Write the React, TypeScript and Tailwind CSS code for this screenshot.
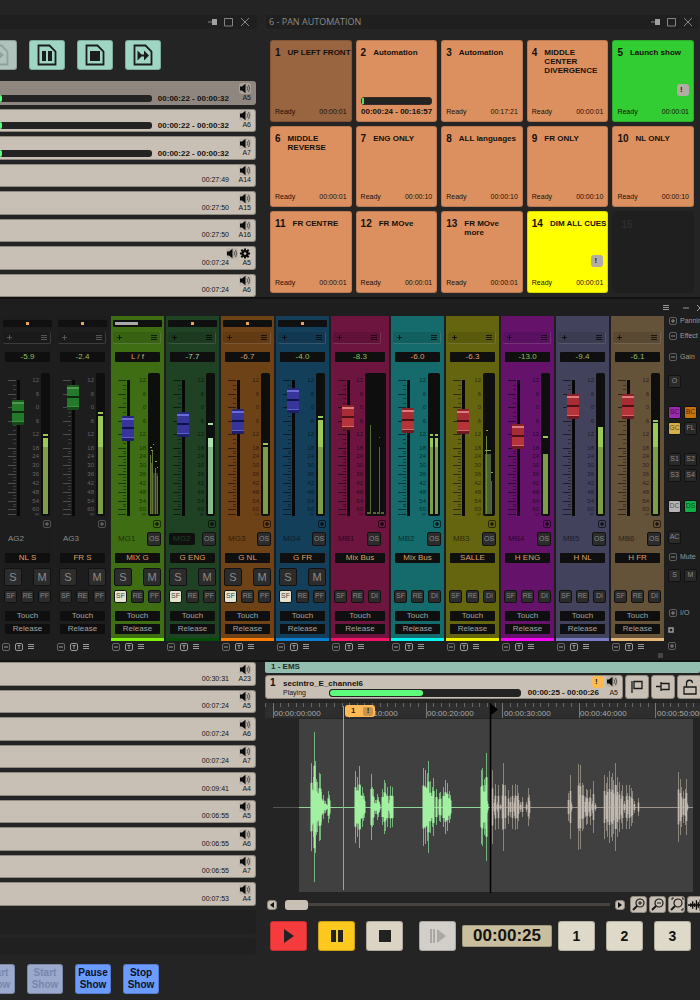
import clsx from 'clsx';

type Strip = {
  id: string;
  name: string;
  value: string;
  valueColor: string;
  bg: string;
  line: string;
  knob: 'green' | 'blue' | 'red';
  knobY: number;
  meter: 'single' | 'pale' | 'stereo' | 'multi' | 'wide' | 'dark';
  top?: number;
  peak?: number;
  group: 'ag' | 'mg' | 'mb';
};

const GREEN = 'text-[#8fbf5c]';
const ORANGE = 'text-[#dda066]';
const PALE = 'text-[#9fd3a6]';

const STRIPS: Strip[] = [
  { id: 'AG2', name: 'NL S', value: '-5.9', valueColor: GREEN, bg: 'bg-[#1d1d1d]', line: 'bg-[#1d1d1d]', knob: 'green', knobY: 413, meter: 'single', top: 438, peak: 434, group: 'ag' },
  { id: 'AG3', name: 'FR S', value: '-2.4', valueColor: GREEN, bg: 'bg-[#1d1d1d]', line: 'bg-[#1d1d1d]', knob: 'green', knobY: 398, meter: 'single', top: 416, peak: 412, group: 'ag' },
  { id: 'MG1', name: 'MIX G', value: 'L / f', valueColor: ORANGE, bg: 'bg-[#3f6d14]', line: 'bg-[#7df00c]', knob: 'blue', knobY: 429, meter: 'multi', group: 'mg' },
  { id: 'MG2', name: 'G ENG', value: '-7.7', valueColor: PALE, bg: 'bg-[#1f4124]', line: 'bg-[#064d08]', knob: 'blue', knobY: 425, meter: 'pale', top: 438, peak: 423, group: 'mg' },
  { id: 'MG3', name: 'G NL', value: '-6.7', valueColor: ORANGE, bg: 'bg-[#6e4217]', line: 'bg-[#ff7b08]', knob: 'blue', knobY: 422, meter: 'single', top: 447, peak: 443, group: 'mg' },
  { id: 'MG4', name: 'G FR', value: '-4.0', valueColor: GREEN, bg: 'bg-[#133f5a]', line: 'bg-[#0a7fd0]', knob: 'blue', knobY: 401, meter: 'single', top: 420, peak: 416, group: 'mg' },
  { id: 'MB1', name: 'Mix Bus', value: '-8.3', valueColor: GREEN, bg: 'bg-[#6d143f]', line: 'bg-[#f51268]', knob: 'red', knobY: 418, meter: 'wide', group: 'mb' },
  { id: 'MB2', name: 'Mix Bus', value: '-6.0', valueColor: ORANGE, bg: 'bg-[#156a6b]', line: 'bg-[#08f4f0]', knob: 'red', knobY: 421, meter: 'stereo', top: 438, peak: 434, group: 'mb' },
  { id: 'MB3', name: 'SALLE', value: '-6.3', valueColor: ORANGE, bg: 'bg-[#65650f]', line: 'bg-[#f2f208]', knob: 'red', knobY: 422, meter: 'dark', group: 'mb' },
  { id: 'MB4', name: 'H ENG', value: '-13.0', valueColor: GREEN, bg: 'bg-[#65126b]', line: 'bg-[#f40af4]', knob: 'red', knobY: 437, meter: 'single', top: 454, peak: 436, group: 'mb' },
  { id: 'MB5', name: 'H NL', value: '-9.4', valueColor: GREEN, bg: 'bg-[#42425c]', line: 'bg-[#7b7bc4]', knob: 'red', knobY: 407, meter: 'single', top: 427, group: 'mb' },
  { id: 'MB6', name: 'H FR', value: '-6.1', valueColor: GREEN, bg: 'bg-[#645239]', line: 'bg-[#e6b678]', knob: 'red', knobY: 407, meter: 'single', top: 423, peak: 420, group: 'mb' },
];

const SCALE: [string, number][] = [
  ['12', 7], ['6', 21], ['0', 34], ['6', 48], ['12', 61], ['18', 75], ['24', 83],
  ['30', 92], ['36', 101], ['42', 110], ['48', 119], ['54', 128], ['60', 136], ['∞', 141],
];

const KNOBS = {
  green: '[&::-webkit-slider-thumb]:bg-[linear-gradient(#1c5a20_0_2px,#4c9a50_2px_4px,#237a2a_4px_11px,#0c2a0e_11px_13px,#237a2a_13px_21px,#3b8f40_21px_22px,#15491a_22px)]',
  blue: '[&::-webkit-slider-thumb]:bg-[linear-gradient(#28287a_0_2px,#6a6ad8_2px_4px,#35359c_4px_11px,#10104a_11px_13px,#35359c_13px_21px,#6060d0_21px_22px,#20206a_22px)]',
  red: '[&::-webkit-slider-thumb]:bg-[linear-gradient(#8a2028_0_2px,#dc7a7c_2px_4px,#a82c34_4px_11px,#4a1014_11px_13px,#b4343a_13px_21px,#d8686c_21px_22px,#6e1a20_22px)]',
};

const TOP_CUES = [
  { playing: true, dim: true, out: 'A5' },
  { playing: true, out: 'A6' },
  { playing: true, out: 'A7' },
  { time: '00:27:49', out: 'A14' },
  { time: '00:27:50', out: 'A15' },
  { time: '00:27:50', out: 'A16' },
  { time: '00:07:24', out: 'A5', gear: true },
  { time: '00:07:24', out: 'A6' },
];

const BOTTOM_CUES = [
  { time: '00:30:31', out: 'A23' },
  { time: '00:07:24', out: 'A5' },
  { time: '00:07:24', out: 'A6' },
  { time: '00:07:24', out: 'A7' },
  { time: '00:09:41', out: 'A4' },
  { time: '00:06:55', out: 'A5' },
  { time: '00:06:55', out: 'A6' },
  { time: '00:06:55', out: 'A7' },
  { time: '00:07:53', out: 'A4' },
];

const PADS = [
  { n: 1, title: 'UP LEFT FRONT', time: '00:00:01', bg: 'bg-[#996440]' },
  { n: 2, title: 'Automation', progress: '00:00:24 - 00:16:57' },
  { n: 3, title: 'Automation', time: '00:17:21' },
  { n: 4, title: 'MIDDLE\nCENTER\nDIVERGENCE', time: '00:00:01' },
  { n: 5, title: 'Launch show', time: '00:00:01', bg: 'bg-[#32cd32]', note: true },
  { n: 6, title: 'MIDDLE\nREVERSE', time: '00:00:01' },
  { n: 7, title: 'ENG ONLY', time: '00:00:10' },
  { n: 8, title: 'ALL languages', time: '00:00:10' },
  { n: 9, title: 'FR ONLY', time: '00:00:10' },
  { n: 10, title: 'NL ONLY', time: '00:00:10' },
  { n: 11, title: 'FR CENTRE', time: '00:00:01' },
  { n: 12, title: 'FR MOve', time: '00:00:01' },
  { n: 13, title: 'FR MOve\nmore', time: '00:00:01' },
  { n: 14, title: 'DIM ALL CUES', time: '00:00:01', bg: 'bg-[#ffff00]', note: true },
];

// [x, half height] pairs of the clip
const PLAYED = [
  [46, 44], [47, 18], [48, 30], [49, 75], [50, 46], [51, 28], [52, 25], [54, 34], [55, 33], [56, 15], [58, 12], [60, 6], [61, 3], [63, 16], [64, 12],
  [90, 36], [91, 12], [92, 30], [94, 41], [95, 22], [97, 20], [98, 14], [99, 11], [106, 33], [107, 20], [108, 18], [110, 7], [112, 13], [113, 10], [114, 5],
  [117, 18], [119, 27], [120, 24], [122, 20], [124, 7], [125, 21], [127, 20], [158, 39], [160, 37], [162, 34], [163, 46], [165, 26], [167, 20], [168, 29], [171, 18], [174, 14], [175, 15],
  [178, 20], [180, 27], [182, 24], [184, 16], [185, 12], [216, 37], [217, 39], [219, 28], [220, 22], [221, 54], [222, 6],
];
const AHEAD = [
  [227, 37], [229, 8], [230, 23], [232, 5], [233, 22], [235, 3], [237, 23], [238, 44], [240, 22], [243, 17], [245, 10], [247, 22], [249, 9], [250, 23], [252, 22], [253, 14], [255, 5], [257, 10],
  [261, 5], [263, 19], [264, 12], [303, 14], [305, 32], [306, 5], [313, 43], [314, 24], [315, 42], [317, 24], [318, 22], [320, 10], [321, 18], [322, 17], [324, 10], [325, 18], [327, 6], [328, 26], [330, 4],
  [339, 32], [341, 24], [342, 30], [344, 36], [346, 30], [347, 34], [348, 27], [350, 44], [351, 22], [352, 30], [354, 25], [356, 16], [357, 22], [359, 6], [361, 22], [362, 14], [364, 22], [366, 19], [367, 16], [369, 6], [373, 9],
  [413, 35], [415, 28], [416, 20], [418, 16], [420, 18], [421, 28], [422, 4],
];

const wavePath = (data: number[][], scale: number) =>
  data.map(([x, h]) => `M${x}.5 ${104 - h * scale}V${104 + h * scale}`).join('');

function Speaker() {
  return (
    <svg viewBox="0 0 12 11" className="h-[11px] w-3 rounded-[3px] bg-[#b5ada4]/70">
      <path d="M1 3.5h2L6.500 .8v9.400L3 7.500H1z" fill="#0b0b0b" />
      <path d="M8 3.500q1.400 2 0 4M9.500 2q2.400 3.500 0 7" fill="none" stroke="#333" strokeWidth=".8" />
    </svg>
  );
}

function Gear() {
  return (
    <svg viewBox="0 0 12 12" className="h-[11px] w-3" stroke="#0b0b0b" fill="none">
      <path d="M6 .5v11M.5 6h11M2 2l8 8M10 2l-8 8" strokeWidth="2.200" />
      <circle cx="6" cy="6" r="2.700" fill="#c9c0b5" strokeWidth="2.400" />
    </svg>
  );
}

function WindowButtons() {
  return (
    <svg viewBox="0 0 42 10" className="h-[10px] w-[42px]" stroke="#858585" fill="none">
      <path d="M0 5h4" />
      <path d="M4 2h5v6H4z" fill="#a0a0a0" stroke="none" />
      <path d="M16.500 1.500h8v7.500h-8zM33 1l8 8M41 1l-8 8" />
    </svg>
  );
}

function PlusBox({ minus, className }: { minus?: boolean; className?: string }) {
  return (
    <svg viewBox="0 0 8 8" className={clsx('h-2 w-2 shrink-0', className)} fill="none" stroke="currentColor">
      <rect x=".5" y=".5" width="7" height="7" rx="1.500" opacity=".6" />
      <path d={minus ? 'M2 4h4' : 'M2 4h4M4 2v4'} />
    </svg>
  );
}

function Lines({ className }: { className?: string }) {
  return (
    <svg viewBox="0 0 6 6" className={clsx('h-[6px] w-[6px]', className)} stroke="currentColor">
      <path d="M0 .5h6M0 2.500h6M0 4.500h6" />
    </svg>
  );
}

type Cue = { time?: string; out: string; playing?: boolean; dim?: boolean; gear?: boolean };

function CueRow({ cue }: { cue: Cue }) {
  return (
    <li className={clsx('flex min-h-0 items-end rounded-r-[3px] border-y border-r border-[#8f887f] pr-1 pb-[2px]', cue.dim ? 'bg-[#8f867f]' : 'bg-[#c9c0b5]')}>
      {cue.playing ? (
        <>
          <div className="h-[7px] flex-1 rounded-r-[3px] bg-[#232323]">
            <div className="h-[7px] w-[2px] rounded-r-[3px] bg-[#5dfc7b]" />
          </div>
          <span className="ml-[6px] text-[8px] leading-[6px] font-bold whitespace-nowrap">00:00:22 - 00:00:32</span>
        </>
      ) : (
        <span className="ml-auto text-[7px] leading-[8px]">{cue.time}</span>
      )}
      <div className="flex w-[22px] flex-col items-end">
        <div className="flex gap-[1px]">
          <Speaker />
          {cue.gear && <Gear />}
        </div>
        <span className="text-[7px] leading-[8px]">{cue.out}</span>
      </div>
    </li>
  );
}

function Note({ className }: { className: string }) {
  return (
    <span className={clsx('flex h-3 w-3 items-center rounded-[3px] pl-[3px] text-[8px] leading-3 font-bold text-[#222]', className)}>!</span>
  );
}

function Pad({ pad }: { pad: (typeof PADS)[number] }) {
  return (
    <button className={clsx('flex aspect-square flex-col rounded-[3px] border border-black/15 px-1 pt-[7px] pb-[5px] text-left text-[#17100a]', pad.bg ?? 'bg-[#dc9060]')}>
      <span className="flex gap-[7px] font-bold">
        <span className="text-[10px] leading-[9px]">{pad.n}</span>
        <span className="text-[8px] leading-[9px] whitespace-pre">{pad.title}</span>
      </span>
      <span className="mt-auto flex flex-col">
        {pad.note && <Note className="mb-[11px] self-end bg-[#b3aca5]" />}
        {pad.progress ? (
          <>
            <span className="mb-[3px] h-2 rounded-[3px] border border-[#3a2c22] bg-[#232323]">
              <span className="block h-[6px] w-[2px] bg-[#4fe070]" />
            </span>
            <span className="text-right text-[8px] leading-[8px] font-bold whitespace-nowrap">{pad.progress}</span>
          </>
        ) : (
          <span className="flex justify-between text-[7px] leading-[9px]">
            <span>Ready</span>
            <span>{pad.time}</span>
          </span>
        )}
      </span>
    </button>
  );
}

function DocButton({ label, glyph, faded }: { label: string; glyph: string; faded?: boolean }) {
  return (
    <button aria-label={label} className={clsx('flex h-[30px] w-9 shrink-0 items-center justify-center rounded-[3px] border border-black/20', faded ? 'bg-[#b0c4bd]' : 'bg-[#9fd6c3]')}>
      <svg viewBox="0 0 20 22" className={clsx('h-[22px] w-5', faded && 'opacity-20')}>
        <path d="M1.500 1.500h11l6 6V20.500h-17z" fill="none" stroke="#1c1c1c" strokeWidth="1.800" />
        <path d={glyph} fill="#1c1c1c" />
      </svg>
    </button>
  );
}

function Meter({ strip }: { strip: Strip }) {
  const t = (strip.top ?? 0) - 373;
  const p = strip.peak ? strip.peak - 373 : null;
  const w = { single: 'w-[9px]', pale: 'w-[9px]', stereo: 'w-3', multi: 'w-3', wide: 'w-[21px]', dark: 'w-3' }[strip.meter];
  const hi = strip.meter === 'pale' ? '#aee0b0' : '#9cc856';
  const lo = strip.meter === 'pale' ? '#86b98c' : '#7d9d48';
  const bars = strip.meter === 'stereo' ? [[2, 3], [7, 3]] : [[2, 5]];
  return (
    <svg className={clsx('h-[143px] shrink-0 rounded-[2px] bg-[#0e0e0e]', w)}>
      {t > 0 && bars.map(([x, bw]) => (
        <g key={x}>
          <rect x={x} y={t} width={bw} height={141 - t} fill={lo} />
          {t < 74 && <rect x={x} y={t} width={bw} height={74 - t} fill={hi} />}
          {p && <rect x={x} y={p} width={bw} height="2" fill={hi} />}
        </g>
      ))}
      {strip.meter === 'multi' && (
        <g fill="none" stroke="#64753a">
          <path d="M2 100h8v41H2z" fill="#333b20" stroke="none" />
          <path d="M2.500 82v59M4.500 78v63M7.500 95v46M9.500 103v38" />
          <path d="M3.500 90v51" stroke="#4a5730" />
          <path d="M2 74.500h2M5 71.500h1M3 77.500h2M7 88.500h2M9 94.500h1" stroke="#8ea551" />
        </g>
      )}
      {strip.meter === 'dark' && (
        <g fill="none">
          <path d="M2 81h6v60H2z" fill="#4b5f33" />
          <path d="M3.500 63v78" stroke="#6d8a3c" />
          <path d="M8.500 108v33" stroke="#54693a" />
          <path d="M3 57.500h2M2 77.500h6M8 99.500h2" stroke="#8aa64e" />
        </g>
      )}
      {strip.meter === 'wide' && (
        <g fill="none" stroke="#55682f">
          <path d="M5.500 52v89M14.500 74v67M14 64.500h1" />
          <path d="M2 140h3M8 140h11" strokeWidth="2" strokeDasharray="3 1" />
        </g>
      )}
    </svg>
  );
}

function Fader({ strip }: { strip: Strip }) {
  const ag = strip.group === 'ag';
  return (
    <div className={clsx('mt-[11px] flex h-[143px] pl-[7px]', strip.meter === 'wide' ? 'pr-[3px]' : 'pr-[4px]')}>
      <svg className={clsx('h-[143px] w-2', ag ? 'text-[#4c4c4c]' : 'text-black/55')} stroke="currentColor">
        {SCALE.map(([label, y], i) => {
          const next = SCALE[i + 1]?.[1] ?? y;
          const step = Math.round((next - y) / 3);
          return (
            <g key={label + y}>
              <path d={`M0 ${y + 0.5}h8`} />
              {next - y > 5 && <path d={`M5 ${y + step + 0.5}h3M5 ${next - step + 0.5}h3`} opacity=".7" />}
            </g>
          );
        })}
      </svg>
      <input
        type="range"
        aria-label={`${strip.id} level`}
        min={0}
        max={117}
        defaultValue={503 - strip.knobY}
        className={clsx(
          '-ml-1 h-[143px] w-3 shrink-0 appearance-none bg-transparent bg-[linear-gradient(#080808,#080808)] bg-[length:3px_136px] bg-bottom bg-no-repeat [direction:rtl] [writing-mode:vertical-lr] [&::-webkit-slider-thumb]:h-[25px] [&::-webkit-slider-thumb]:w-3 [&::-webkit-slider-thumb]:appearance-none [&::-webkit-slider-thumb]:rounded-[1px]',
          KNOBS[strip.knob],
        )}
      />
      <svg className={clsx('h-[143px] min-w-0 flex-1', ag ? 'text-[#666]' : 'text-black/60')}>
        {SCALE.map(([label, y]) => (
          <text key={label + y} x="100%" dx="-2" y={y + 2} textAnchor="end" fontSize="6" fill="currentColor">{label}</text>
        ))}
      </svg>
      <Meter strip={strip} />
    </div>
  );
}

const KEY = 'flex items-center justify-center rounded-[2px] border border-[#121212] bg-[#2c2c2c] text-[#8a8a8a]';
const SLOT = 'flex h-[10px] w-full items-center justify-center rounded-[1px] bg-[#0f0f0f] text-[8px] leading-[10px]';

function ChannelStrip({ strip }: { strip: Strip }) {
  const ag = strip.group === 'ag';
  const mb = strip.group === 'mb';
  return (
    <section className={clsx('flex flex-col', strip.meter === 'wide' ? 'w-[58px] shrink-0' : 'min-w-0 flex-1')}>
      <div className={clsx('flex flex-col', strip.bg)}>
        <div className={clsx('mx-[2px] mt-1 flex h-[7px] items-center rounded-[1px] px-[2px]', !mb && 'bg-[#101010]', strip.id !== 'MG1' && 'justify-center')}>
          {!mb && <span className={strip.id === 'MG1' ? 'h-[3px] w-[23px] bg-[#a9a9a9]' : 'h-[3px] w-[3px] bg-[#e8a55c]'} />}
        </div>
        <div className={clsx('mx-[2px] mt-[5px] flex h-3 w-[48px] items-center justify-between rounded-[2px] border-r border-b border-white/15 bg-black/10 pr-[3px] pl-1', ag ? 'text-[#555]' : 'text-black/70')}>
          <svg viewBox="0 0 5 5" className="h-[5px] w-[5px]" stroke="currentColor"><path d="M0 2.500h5M2.500 0v5" /></svg>
          <Lines />
        </div>
        <div className="mt-2 px-1">
          <output className={clsx(SLOT, strip.valueColor)}>{strip.value}</output>
        </div>
        <Fader strip={strip} />
        <div className={clsx('mt-1 flex h-2 justify-end pr-[3px]', ag ? 'text-[#777]' : 'text-black')}>
          <PlusBox />
        </div>
        <div className="mt-1 flex h-[14px] items-center pl-[3px]">
          <span className={clsx('flex h-3 w-[26px] items-center rounded-[2px] pl-1 text-[8px]', ag ? 'text-[#8c8c8c]' : strip.id === 'MG2' ? 'bg-[#0f0f0f] text-[#1f4124]' : 'text-black/60')}>{strip.id}</span>
          {!ag && <button className={clsx(KEY, 'ml-[7px] h-[14px] w-[14px] shrink-0 text-[7px]')}>OS</button>}
        </div>
        <div className="mt-[7px] px-1">
          <div className={clsx(SLOT, ORANGE)}>{strip.name}</div>
        </div>
        <div className="mt-[5px] flex h-[18px] w-[50px] justify-between pl-[3px] text-[11px]">
          {!mb && <button className={clsx(KEY, 'w-[18px]')}>S</button>}
          {!mb && <button className={clsx(KEY, 'w-[18px]')}>M</button>}
        </div>
        <div className="mt-1 flex h-[13px] w-[50px] justify-between pl-[3px] text-[7px]">
          <button className={clsx('flex w-[13px] items-center justify-center rounded-[2px] border border-[#121212]', strip.group === 'mg' ? 'bg-[#e6e4cc] text-[#444]' : 'bg-[#2c2c2c] text-[#8a8a8a]')}>SF</button>
          <button className={clsx(KEY, 'w-[13px]')}>RE</button>
          <button className={clsx(KEY, 'w-[13px]')}>{mb ? 'DI' : 'PF'}</button>
        </div>
        <div className="mt-2 flex flex-col gap-[3px] px-1">
          <button className={clsx(SLOT, 'text-[#a3a3a3]')}>Touch</button>
          <button className={clsx(SLOT, 'text-[#a3a3a3]')}>Release</button>
        </div>
        <div className={clsx('mt-1 h-[3px]', strip.line)} />
      </div>
      <div className="mt-[2px] flex h-2 items-center gap-[5px] pl-[1px] text-[#9a9a9a]">
        <PlusBox minus />
        <svg viewBox="0 0 8 8" className="h-2 w-2" stroke="currentColor" fill="none">
          <rect x=".5" y=".5" width="7" height="7" rx="1.500" />
          <path d="M2.500 2.500h3M4 2.500V6" />
        </svg>
        <Lines />
      </div>
    </section>
  );
}

function SideLabel({ text, minus, className }: { text: string; minus?: boolean; className?: string }) {
  return (
    <div className={clsx('flex h-2 items-center gap-[3px] pl-[1px] text-[7px] leading-[8px] text-[#9a9a9a]', className)}>
      <PlusBox minus={minus} className="text-[#8a8a8a]" />
      <span>{text}</span>
    </div>
  );
}

function SideKeys({ keys, className }: { keys: [string, string?][]; className?: string }) {
  return (
    <div className={clsx('flex gap-[3px]', className)}>
      {keys.map(([label, tone]) => (
        <button key={label} className={clsx('flex h-[13px] w-[13px] shrink-0 items-center justify-center rounded-[2px] border border-[#121212] text-[7px]', tone ?? 'bg-[#2a2a2a] text-[#8a8a8a]')}>{label}</button>
      ))}
    </div>
  );
}

function Mixer() {
  return (
    <main className="overflow-hidden border-y-2 border-[#121212] bg-[#1e1e1e]">
      <div className="flex h-[17px] items-center justify-end gap-[14px] text-[#9a9a9a]">
        <Lines />
        <svg viewBox="0 0 17 8" className="h-2 w-[17px]" stroke="currentColor"><path d="M0 4h6M14 1l6 6M14 7l6-6" /></svg>
      </div>
      <div className="flex pl-[1px]">
        <div className="flex min-w-0 flex-1 gap-[2px]">
          {STRIPS.map((s) => <ChannelStrip key={s.id} strip={s} />)}
        </div>
        <aside className="flex w-[36px] shrink-0 flex-col pl-1">
          <SideLabel text="Panning" className="mt-[1px]" />
          <SideLabel text="Effect" minus className="mt-[7px]" />
          <SideLabel text="Gain" minus className="mt-[13px]" />
          <SideKeys keys={[['O']]} className="mt-[14px]" />
          <SideKeys keys={[['SC', 'bg-[#9a2bb0] text-[#3c0c46]'], ['BC', 'bg-[#c87408] text-[#4a2a04]']]} className="mt-[18px]" />
          <SideKeys keys={[['GC', 'bg-[#d6b04a] text-[#5c4a1c]'], ['FL']]} className="mt-[3px]" />
          <SideKeys keys={[['S1'], ['S2']]} className="mt-[18px]" />
          <SideKeys keys={[['S3'], ['S4']]} className="mt-[3px]" />
          <SideKeys keys={[['DC', 'bg-[#b4b4b4] text-[#555]'], ['DS', 'bg-[#10b048] text-[#044c1c]']]} className="mt-[18px]" />
          <SideKeys keys={[['AC']]} className="mt-[18px]" />
          <SideLabel text="Mute" minus className="mt-[9px]" />
          <SideKeys keys={[['S'], ['M']]} className="mt-2" />
          <SideLabel text="I/O" className="mt-[27px]" />
          <svg viewBox="0 0 6 6" className="mt-[10px] h-[6px] w-[6px]" stroke="#9a9a9a" fill="none" strokeWidth="1.500"><path d="M1 1h4v4H1z" /></svg>
          <PlusBox className="mt-[9px] text-[#8a8a8a]" />
        </aside>
      </div>
      <div className="flex h-[9px] items-center justify-end pr-[37px]">
        <span className="h-[5px] w-[5px] bg-[#454545]" />
      </div>
    </main>
  );
}

function Waveform() {
  return (
    <div className="relative mt-1 h-[190px] overflow-hidden">
      <svg className="h-full w-full" fill="none">
        <rect width="100%" height="15" fill="#2e2e2e" />
        <rect x="34" y="16" width="394" height="173" fill="#404040" />
        {Array.from({ length: 57 }, (_, i) => (
          <path key={i} d={`M${Math.round(i * 7.65)}.5 0v${i % 10 === 1 ? 15 : 4}`} stroke={i % 10 === 1 ? '#777' : '#666'} />
        ))}
        {[0, 1, 2, 3, 4, 5].map((n) => (
          <text key={n} x={9 + Math.round(n * 76.5)} y="13" fontSize="8" fill="#a8a8a8">{`00:00:${n}0:000`}</text>
        ))}
        <path d="M8 104.500h26" stroke="#555" />
        <path d="M34 104.500h191" stroke="#8fd695" />
        <path d="M225 104.500h203" stroke="#9d958b" />
        <path d={wavePath(PLAYED, 1)} stroke="#76b47d" />
        <path d={wavePath(PLAYED, 0.55)} stroke="#a2f0a2" strokeWidth="2" />
        <path d={wavePath(AHEAD, 1)} stroke="#8c857c" />
        <path d={wavePath(AHEAD, 0.5)} stroke="#c0b8ae" strokeWidth="1.600" />
        <path d="M78.500 3v184" stroke="#cf9a4a" />
        <path d="M225.500 0v190" stroke="#000" strokeWidth="1.500" />
        <path d="M226 1l7 5.500l-7 5.500z" fill="#000" />
      </svg>
      <button className="absolute top-[2px] left-[80px] flex h-3 w-[30px] items-center justify-between rounded-[3px] bg-[#ffba57] pr-[2px] pl-[6px] text-[8px] font-bold text-[#2c1e08]">
        1
        <span className="flex h-[9px] w-[10px] items-center justify-center rounded-[2px] bg-[#c8934a]">!</span>
      </button>
    </div>
  );
}

const TOOL = 'flex shrink-0 items-center justify-center rounded-[3px] border border-[#8f887f] bg-[#c9c0b5]';
const TRANSPORT = 'flex h-[30px] w-[37px] shrink-0 items-center justify-center rounded-[3px] border border-black/20';

function Player() {
  return (
    <section className="min-w-0 flex-1 overflow-hidden">
      <h2 className="h-[11px] rounded-b-[2px] bg-[#93beaf] pl-[6px] text-[8px] leading-[9px] font-bold text-[#1d2c27]">1 - EMS</h2>
      <div className="mt-[2px] -mr-[2px] flex h-6 gap-[2px]">
        <div className="flex min-w-0 flex-1 rounded-[3px] border border-[#8f887f] bg-[#c9c0b5] pl-1">
          <span className="mt-[2px] w-[13px] text-[10px] leading-[10px] font-bold">1</span>
          <div className="flex flex-1 flex-col pt-[3px]">
            <span className="text-[8px] leading-[9px] font-bold">secintro_E_channel6</span>
            <div className="flex items-center">
              <span className="w-[46px] text-[7px] leading-[9px]">Playing</span>
              <div className="h-2 flex-1 rounded-[3px] border border-[#232323] bg-[#232323]">
                <div className="h-[6px] w-[49%] rounded-[3px] bg-[#5dfc7b]" />
              </div>
            </div>
          </div>
          <div className="flex w-[78px] items-end justify-end pb-[1px]">
            <span className="text-[8px] leading-[8px] font-bold whitespace-nowrap">00:00:25 - 00:00:26</span>
          </div>
          <div className="flex w-[23px] flex-col items-end pr-1">
            <div className="flex gap-[2px]">
              <Note className="bg-[#ffb952]" />
              <Speaker />
            </div>
            <span className="text-[7px] leading-[9px]">A5</span>
          </div>
        </div>
        <button aria-label="Add flag" className={clsx(TOOL, 'w-6')}>
          <svg viewBox="0 0 14 14" className="h-[14px] w-[14px]" fill="none" stroke="#1a1a1a" strokeWidth="1.300"><path d="M2 1v12M4 1.500h8v7H4z" /></svg>
        </button>
        <button aria-label="Snap" className={clsx(TOOL, 'w-6')}>
          <svg viewBox="0 0 14 14" className="h-[14px] w-[14px]" fill="none" stroke="#1a1a1a" strokeWidth="1.300"><path d="M0 6.500h5M5 2v9M5 3.500h8v6H5" /></svg>
        </button>
        <button aria-label="Unlock" className={clsx(TOOL, 'w-[25px]')}>
          <svg viewBox="0 0 14 16" className="h-4 w-[14px]" fill="none" stroke="#1a1a1a" strokeWidth="1.300"><path d="M1 8h12v7H1zM3.500 8V4.500a3 3 0 0 1 6-.5" /></svg>
        </button>
      </div>
      <Waveform />
      <div className="mt-[3px] flex h-[17px] items-center overflow-hidden pl-[2px]">
        <button aria-label="Scroll left" className={clsx(TOOL, 'h-[10px] w-[10px]')}>
          <svg viewBox="0 0 4 6" className="h-[6px] w-1"><path d="M4 0v6L0 3z" fill="#111" /></svg>
        </button>
        <input
          type="range"
          aria-label="Timeline position"
          defaultValue={0}
          className="ml-2 h-[10px] min-w-0 flex-1 appearance-none bg-transparent bg-[linear-gradient(#47443f,#47443f)] bg-[length:100%_3px] bg-center bg-no-repeat [&::-webkit-slider-thumb]:h-[10px] [&::-webkit-slider-thumb]:w-[23px] [&::-webkit-slider-thumb]:appearance-none [&::-webkit-slider-thumb]:rounded-[3px] [&::-webkit-slider-thumb]:bg-[#c9c0b5]"
        />
        <button aria-label="Scroll right" className={clsx(TOOL, 'mx-[5px] h-[10px] w-[10px]')}>
          <svg viewBox="0 0 4 6" className="h-[6px] w-1"><path d="M0 0v6l4-3z" fill="#111" /></svg>
        </button>
        <div className="-mr-1 flex gap-[2px]">
          {['M7 6h4M9 4v4', 'M7 6h4', ''].map((d, i) => (
            <button key={i} aria-label={['Zoom in', 'Zoom out', 'Zoom to fit'][i]} className={clsx(TOOL, 'h-[17px] w-[17px]')}>
              <svg viewBox="0 0 15 15" className="h-[15px] w-[15px]" fill="none" stroke="#1a1a1a" strokeWidth="1.200">
                <circle cx="9" cy="6" r="4" />
                <path d="M6 9l-4 4" strokeWidth="2" />
                <path d={d || 'M3 3V1h2M13 1h1v2M14 11v2h-2'} strokeWidth="1" />
              </svg>
            </button>
          ))}
          <button aria-label="Waveform view" className={clsx(TOOL, 'h-[17px] w-[17px]')}>
            <svg viewBox="0 0 16 14" className="h-[14px] w-4" stroke="#0a0a0a" strokeWidth="1.400"><path d="M0 7h16M3 5v4M5 3v8M7 5v4M9 2v10M11 4v6M13 1v12" /></svg>
          </button>
        </div>
      </div>
      <div className="mt-2 flex items-center gap-[11px] pl-[5px]">
        <button aria-label="Play" className={clsx(TRANSPORT, 'bg-[#f53b3b]')}>
          <svg viewBox="0 0 10 14" className="h-[14px] w-[10px]"><path d="M0 0l10 7L0 14z" fill="#222" /></svg>
        </button>
        <button aria-label="Pause" className={clsx(TRANSPORT, 'bg-[#ffc81e]')}>
          <svg viewBox="0 0 12 12" className="h-3 w-3"><path d="M0 0h5v12H0zM7 0h5v12H7z" fill="#222" /></svg>
        </button>
        <button aria-label="Stop" className={clsx(TRANSPORT, 'bg-[#dbd4c4]')}>
          <svg viewBox="0 0 12 12" className="h-3 w-3"><path d="M0 0h12v12H0z" fill="#222" /></svg>
        </button>
        <button aria-label="Step" disabled className={clsx(TRANSPORT, 'ml-[5px] bg-[#d2cfcb]')}>
          <svg viewBox="0 0 16 14" className="h-[14px] w-4" fill="#aaa7a4"><path d="M0 0h2v14H0zM3 0h2v14H3zM7 0l9 7l-9 7z" /></svg>
        </button>
        <output className="-mx-[5px] flex h-[22px] flex-1 items-center justify-center rounded-[2px] border border-black/20 bg-[#c9bf9f] text-[17px] font-bold">00:00:25</output>
        <button className={clsx(TRANSPORT, 'bg-[#dfd9ca] text-[14px] font-bold')}>1</button>
        <button className={clsx(TRANSPORT, 'bg-[#dfd9ca] text-[14px] font-bold')}>2</button>
        <button className={clsx(TRANSPORT, 'mr-[9px] bg-[#dfd9ca] text-[14px] font-bold')}>3</button>
      </div>
    </section>
  );
}

export default function App() {
  return (
    <div className="min-h-screen overflow-hidden bg-[#242424] font-['Liberation_Sans',Arial,sans-serif] text-[#15120f]">
      <div className="flex gap-[9px] pt-[15px]">
        <section className="w-[257px] shrink-0 overflow-hidden">
          <header className="flex h-[14px] items-center justify-end rounded-r-[3px] bg-[#1f1f1f] pr-[7px]">
            <WindowButtons />
          </header>
          <div className="mt-[11px] -ml-[19px] flex gap-3">
            <DocButton label="Go" glyph="M4 9h5V6l6 5l-6 5v-3H4z" faded />
            <DocButton label="Pause list" glyph="M5 7h4v10H5zM11 7h4v10h-4z" />
            <DocButton label="Stop list" glyph="M5 7h10v10H5z" />
            <DocButton label="Next" glyph="M4.500 6.500v10l4-4h2.500v4l5-5l-5-5v4H8.500z" />
          </div>
          <ul className="mt-[11px] mr-[1px] grid h-[216px] auto-rows-fr gap-1">
            {TOP_CUES.map((cue, i) => <CueRow key={i} cue={cue} />)}
          </ul>
        </section>
        <section className="min-w-0 flex-1">
          <header className="mr-[1px] flex h-[14px] items-center justify-between rounded-[3px] bg-[#1f1f1f] pr-[6px] pl-[3px]">
            <h2 className="font-['Open_Sans',sans-serif] text-[9px] text-[#8c8c8c]">6 - PAN AUTOMATION</h2>
            <WindowButtons />
          </header>
          <div className="mt-[11px] mr-[6px] ml-1 grid grid-cols-5 gap-1">
            {PADS.map((pad) => <Pad key={pad.n} pad={pad} />)}
            <div className="aspect-square rounded-[3px] bg-[#1f1f1f] pt-2 pl-[9px] text-[10px] leading-3 font-bold text-[#2d2d2d]">15</div>
          </div>
        </section>
      </div>
      <Mixer />
      <div className="flex gap-[9px]">
        <section className="w-[256px] shrink-0 overflow-hidden">
          <ul className="grid h-[244px] auto-rows-fr gap-1">
            {BOTTOM_CUES.map((cue, i) => <CueRow key={i} cue={cue} />)}
          </ul>
          <div className="mt-1 h-6 rounded-r-[3px] bg-[#202020]" />
          <div className="mt-1 h-[17px] rounded-r-[3px] bg-[#202020]" />
          <div className="mt-[9px] -ml-[21px] flex gap-3 text-[10px] leading-3 font-bold">
            <button disabled className="h-[30px] w-9 rounded-[3px] border border-black/20 bg-[#9ba9cf] text-[#7886ac]">Start Show</button>
            <button disabled className="h-[30px] w-9 rounded-[3px] border border-black/20 bg-[#9ba9cf] text-[#7886ac]">Start Show</button>
            <button className="h-[30px] w-9 rounded-[3px] border border-black/20 bg-[#6b9bff] text-[#0c1224]">Pause Show</button>
            <button className="h-[30px] w-9 rounded-[3px] border border-black/20 bg-[#6b9bff] text-[#0c1224]">Stop Show</button>
          </div>
        </section>
        <Player />
      </div>
    </div>
  );
}
